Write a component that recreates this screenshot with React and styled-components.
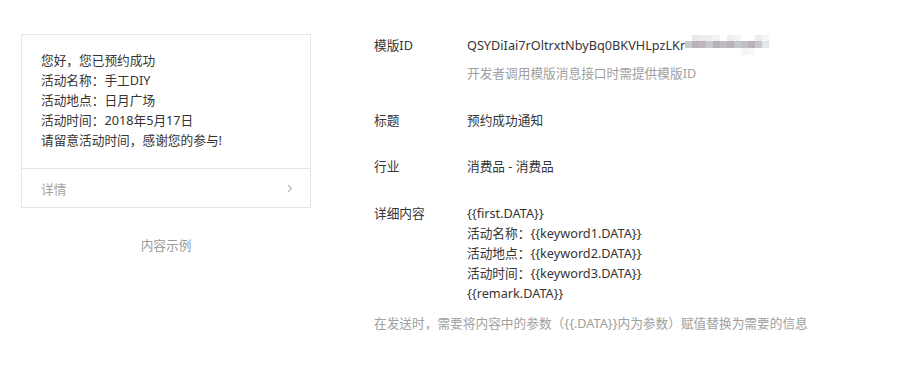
import React from 'react';
import styled, { createGlobalStyle } from 'styled-components';

const GlobalStyle = createGlobalStyle`
    body {
        margin: 0;
        background: #fff;
        font-family: "Noto Sans", "Noto Sans CJK SC", sans-serif;
        font-size: 12.7px;
        color: #353535;
    }
`;

const Page = styled.div`
    display: flex;
    align-items: flex-start;
    padding: 34px 0 0 21px;
`;

const Preview = styled.div`
    width: 290px;
    display: flex;
    flex-direction: column;
`;

const Card = styled.div`
    border: 1px solid #e4e8eb;
    background: #fff;
`;

const CardBody = styled.div`
    padding: 15px 19px 18px;
    line-height: 20px;
    border-bottom: 1px solid #e4e8eb;
`;

const CardLink = styled.div`
    height: 38px;
    padding: 0 17px 0 19px;
    display: flex;
    align-items: center;
    justify-content: space-between;
    color: #a3a3a3;
`;

const Caption = styled.div`
    margin-top: 27px;
    text-align: center;
    line-height: 20px;
    color: #9a9a9a;
`;

const Details = styled.div`
    margin-left: 63px;
    margin-top: 1px;
    display: flex;
    flex-direction: column;
`;

const Row = styled.div`
    display: flex;
    line-height: 20px;
    margin-top: ${props => props.first ? "0" : props.gap || "27px"};
`;

const Label = styled.div`
    width: 93px;
    flex-shrink: 0;
`;

const Value = styled.div`
    display: flex;
    flex-direction: column;
`;

const Hint = styled.div`
    color: #a0a0a0;
    margin-top: ${props => props.gap || "8px"};
    line-height: 20px;
`;

const IdLine = styled.div`
    display: flex;
    align-items: center;
`;

const Footer = styled.div`
    margin-top: 10px;
    line-height: 20px;
    color: #a0a0a0;
`;

const cardLines = [
    "您好，您已预约成功",
    "活动名称：手工DIY",
    "活动地点：日月广场",
    "活动时间：2018年5月17日",
    "请留意活动时间，感谢您的参与!",
];

const contentLines = [
    "{{first.DATA}}",
    "活动名称：{{keyword1.DATA}}",
    "活动地点：{{keyword2.DATA}}",
    "活动时间：{{keyword3.DATA}}",
    "{{remark.DATA}}",
];

const mosaicTop = ["", "#e9e7ea", "#eceaec", "#efedef", "#f3f3f5", "", "#f0eef0", "#f3f2f4", "", "", "#eeecee", "#f5f5f7"];
const mosaicMid = ["#c6cad0", "#b9b2b7", "#beb7bb", "#c6c8cc", "#b7b0b5", "#c0babe", "#b9b2b7", "#c4c7cb", "#c2bec1", "#bab4b7", "#c5c7ca", "#e3e6ea"];
const mosaicBot = ["", "", "", "", "", "", "", "", "#f6f5f6", "#f7f7f8", "", ""];

const Mosaic = () => (
    <svg width="84" height="20" viewBox="0 0 84 20" style={{ display: 'block' }}>
        {mosaicTop.map((c, i) => c && <rect key={'t' + i} x={i * 7} y="0" width="7" height="6" fill={c} />)}
        {mosaicMid.map((c, i) => <rect key={'m' + i} x={i * 7} y="6" width="7" height="7" fill={c} />)}
        {mosaicBot.map((c, i) => c && <rect key={'b' + i} x={i * 7} y="13" width="7" height="7" fill={c} />)}
    </svg>
);

const Chevron = () => (
    <svg width="6" height="9" viewBox="0 0 6 9">
        <path d="M1 1 L4.5 4.5 L1 8" fill="none" stroke="#b8b8b8" strokeWidth="1.1" />
    </svg>
);

const App = () => {
    return (
        <>
            <GlobalStyle />
            <Page>
                <Preview>
                    <Card>
                        <CardBody>
                            {cardLines.map((line, i) => <div key={i}>{line}</div>)}
                        </CardBody>
                        <CardLink>
                            <span>详情</span>
                            <Chevron />
                        </CardLink>
                    </Card>
                    <Caption>内容示例</Caption>
                </Preview>
                <Details>
                    <Row first>
                        <Label>模版ID</Label>
                        <Value>
                            <IdLine>
                                <span>QSYDiIai7rOltrxtNbyBq0BKVHLpzLKr</span>
                                <Mosaic />
                            </IdLine>
                            <Hint>开发者调用模版消息接口时需提供模版ID</Hint>
                        </Value>
                    </Row>
                    <Row>
                        <Label>标题</Label>
                        <Value>预约成功通知</Value>
                    </Row>
                    <Row gap="26px">
                        <Label>行业</Label>
                        <Value>消费品 - 消费品</Value>
                    </Row>
                    <Row>
                        <Label>详细内容</Label>
                        <Value>
                            {contentLines.map((line, i) => <div key={i}>{line}</div>)}
                        </Value>
                    </Row>
                    <Footer>在发送时，需要将内容中的参数（{"{{.DATA}}"}内为参数）赋值替换为需要的信息</Footer>
                </Details>
            </Page>
        </>
    );
};

export default App;
